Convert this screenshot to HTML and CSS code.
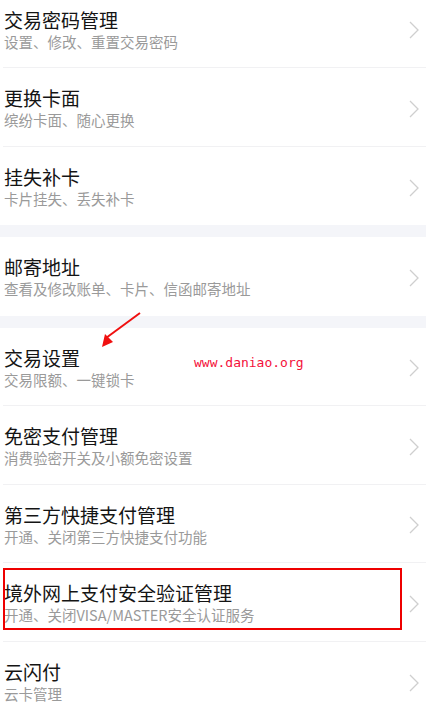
FILE: index.html
```html
<!DOCTYPE html>
<html lang="zh-CN">
<head>
<meta charset="utf-8">
<title>卡片管理</title>
<link rel="stylesheet" href="styles.css">
</head>
<body>
<div class="page">
  <div class="group">
    <div class="row">
      <div class="text"><div class="title">交易密码管理</div><div class="sub">设置、修改、重置交易密码</div></div>
      <svg class="chev" viewBox="0 0 10 18"><polyline points="1,1 9,9 1,17"/></svg>
    </div>
    <div class="row">
      <div class="text"><div class="title">更换卡面</div><div class="sub">缤纷卡面、随心更换</div></div>
      <svg class="chev" viewBox="0 0 10 18"><polyline points="1,1 9,9 1,17"/></svg>
    </div>
    <div class="row">
      <div class="text"><div class="title">挂失补卡</div><div class="sub">卡片挂失、丢失补卡</div></div>
      <svg class="chev" viewBox="0 0 10 18"><polyline points="1,1 9,9 1,17"/></svg>
    </div>
  </div>
  <div class="group">
    <div class="row">
      <div class="text"><div class="title">邮寄地址</div><div class="sub">查看及修改账单、卡片、信函邮寄地址</div></div>
      <svg class="chev" viewBox="0 0 10 18"><polyline points="1,1 9,9 1,17"/></svg>
    </div>
  </div>
  <div class="group">
    <div class="row">
      <div class="text"><div class="title">交易设置</div><div class="sub">交易限额、一键锁卡</div></div>
      <svg class="chev" viewBox="0 0 10 18"><polyline points="1,1 9,9 1,17"/></svg>
    </div>
    <div class="row">
      <div class="text"><div class="title">免密支付管理</div><div class="sub">消费验密开关及小额免密设置</div></div>
      <svg class="chev" viewBox="0 0 10 18"><polyline points="1,1 9,9 1,17"/></svg>
    </div>
    <div class="row">
      <div class="text"><div class="title">第三方快捷支付管理</div><div class="sub">开通、关闭第三方快捷支付功能</div></div>
      <svg class="chev" viewBox="0 0 10 18"><polyline points="1,1 9,9 1,17"/></svg>
    </div>
    <div class="row">
      <div class="text"><div class="title">境外网上支付安全验证管理</div><div class="sub">开通、关闭VISA/MASTER安全认证服务</div></div>
      <svg class="chev" viewBox="0 0 10 18"><polyline points="1,1 9,9 1,17"/></svg>
    </div>
    <div class="row">
      <div class="text"><div class="title">云闪付</div><div class="sub">云卡管理</div></div>
      <svg class="chev" viewBox="0 0 10 18"><polyline points="1,1 9,9 1,17"/></svg>
    </div>
  </div>

  <svg class="arrow" viewBox="0 0 50 40" width="50" height="40">
    <line x1="48" y1="2" x2="14" y2="27"/>
    <polygon points="10,36 13,23 21,31"/>
  </svg>
  <div class="watermark">www.daniao.org</div>
  <div class="highlight"></div>
</div>
</body>
</html>
```
FILE: styles.css
```css
html, body {
  margin: 0;
  padding: 0;
  background: #f4f5f9;
  overflow: hidden;
}
body {
  font-family: "Noto Sans CJK SC", "Noto Sans", sans-serif;
}
.page {
  position: relative;
  margin-top: -10.5px;
}
.group {
  background: #fff;
  margin-bottom: 12px;
}
.row {
  box-sizing: border-box;
  height: 78.5px;
  margin-left: 3px;
  padding: 19px 7px 0 1px;
  display: flex;
  align-items: flex-start;
  border-bottom: 1px solid #f1f1f3;
}
.row:last-child {
  border-bottom: none;
}
.text {
  flex: 1;
}
.title {
  font-size: 19px;
  line-height: 22px;
  color: #141414;
  white-space: nowrap;
}
.sub {
  font-size: 14.5px;
  line-height: 22px;
  color: #9a9a9a;
  white-space: nowrap;
}
.chev {
  width: 10px;
  height: 18px;
  margin-top: 3px;
  align-self: center;
  margin-bottom: 18px;
}
.chev polyline {
  fill: none;
  stroke: #cfcfcf;
  stroke-width: 1.3;
}
.arrow {
  position: absolute;
  left: 92px;
  top: 321.5px;
}
.arrow line {
  stroke: #f01010;
  stroke-width: 2;
}
.arrow polygon {
  fill: #f01010;
}
.watermark {
  position: absolute;
  left: 194px;
  top: 364px;
  font-family: "DejaVu Sans Mono", monospace;
  font-size: 13px;
  line-height: 18px;
  color: #f4103a;
}
.highlight {
  position: absolute;
  left: 3px;
  top: 578.5px;
  width: 395px;
  height: 58px;
  border: 2px solid #ee0000;
}
```
